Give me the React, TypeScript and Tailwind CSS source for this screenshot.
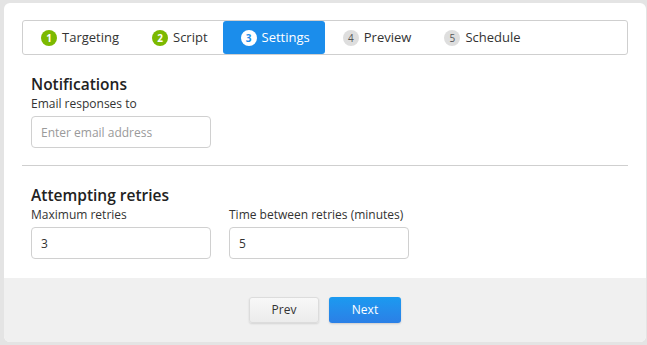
const steps = [
  { n: 1, label: "Targeting", state: "done" },
  { n: 2, label: "Script", state: "done" },
  { n: 3, label: "Settings", state: "active" },
  { n: 4, label: "Preview", state: "todo" },
  { n: 5, label: "Schedule", state: "todo" },
];

function Step({ n, label, state }: { n: number; label: string; state: string }) {
  const active = state === "active";
  return (
    <div
      className={`flex h-full items-center gap-[5px] pl-[18px] pr-[15px] ${
        active ? "bg-[#1b8deb] text-white rounded-[3px] -my-px h-[36px]" : "text-[#333]"
      }`}
    >
      <span
        className={`flex h-[16px] w-[16px] items-center justify-center rounded-full text-[10px] font-bold leading-none ${
          state === "done"
            ? "bg-[#7cb900] text-white"
            : active
            ? "bg-white text-[#1b8deb]"
            : "bg-[#dedede] text-[#555] font-normal"
        }`}
      >
        {n}
      </span>
      <span className="text-[13px]">{label}</span>
    </div>
  );
}

function Field({ label, value, placeholder }: { label: string; value?: string; placeholder?: string }) {
  return (
    <div className="w-[180px]">
      <label className="block text-[12px] leading-[16px] text-[#333]">{label}</label>
      <input
        defaultValue={value}
        placeholder={placeholder}
        className="mt-[4px] h-[32px] w-full rounded-[4px] border border-[#d0d0d0] bg-white px-[9px] text-[12px] text-[#333] placeholder:text-[#9a9a9a] outline-none"
      />
    </div>
  );
}

export default function App() {
  return (
    <div
      className="h-[345px] w-[647px] bg-[#e4e4e4] pl-[4px] pr-px pt-[3px]"
      style={{ fontFamily: '"Open Sans", "Noto Sans", sans-serif' }}
    >
      <div className="flex h-[339px] flex-col overflow-hidden rounded-[6px] bg-white">
        <div className="px-[18px] pt-[17px]">
          <div className="flex h-[35px] items-center rounded-[3px] border border-[#cfcfcf]">
            {steps.map((s) => (
              <Step key={s.n} {...s} />
            ))}
          </div>

          <div className="px-[9px]">
            <h2 className="mt-[18px] text-[15.5px] font-semibold leading-[22px] text-[#222]">Notifications</h2>
            <div className="mt-[1px]">
              <Field label="Email responses to" placeholder="Enter email address" />
            </div>
          </div>

          <div className="mt-[17px] h-px bg-[#cfcfcf]" />

          <div className="px-[9px]">
            <h2 className="mt-[18px] text-[15.5px] font-semibold leading-[22px] text-[#222]">Attempting retries</h2>
            <div className="mt-[1px] flex gap-[18px]">
              <Field label="Maximum retries" value="3" />
              <Field label="Time between retries (minutes)" value="5" />
            </div>
          </div>
        </div>

        <div className="mt-auto flex h-[64px] items-center justify-center gap-[10px] bg-[#f0f0f0]">
          <button className="h-[26px] w-[70px] rounded-[3px] border border-[#dcdcdc] bg-gradient-to-b from-[#f8f8f8] to-[#ececec] text-[12px] text-[#333] shadow-[0_1px_2px_rgba(0,0,0,0.12)]">
            Prev
          </button>
          <button className="h-[26px] w-[72px] rounded-[3px] bg-gradient-to-b from-[#1a9af0] to-[#2b7fe6] text-[12px] text-white shadow-[0_1px_2px_rgba(0,0,0,0.15)]">
            Next
          </button>
        </div>
      </div>
    </div>
  );
}
